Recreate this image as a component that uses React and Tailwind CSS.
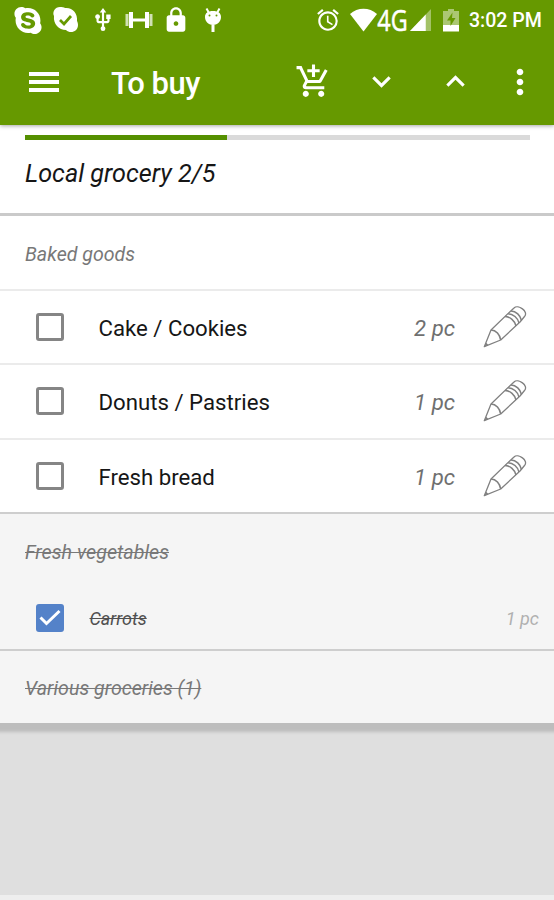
import React, { useState } from 'react';
import {
  MdAddShoppingCart,
  MdAlarm,
  MdExpandLess,
  MdExpandMore,
  MdLock,
  MdMoreVert,
  MdUsb,
} from 'react-icons/md';
import { FaSkype } from 'react-icons/fa';

const bakedGoods = [
  { id: 1, name: 'Cake / Cookies', amount: '2 pc' },
  { id: 2, name: 'Donuts / Pastries', amount: '1 pc' },
  { id: 3, name: 'Fresh bread', amount: '1 pc' },
];

function PencilIcon() {
  return (
    <svg width="44" height="44" viewBox="0 0 44 44" fill="none" stroke="#808080" strokeWidth="1.3" strokeLinejoin="round">
      <path d="M1.3 41.7 8 25 27 6.7 31 3c4-4 15 3.5 10.5 8.500L37 17 17.7 35 1.3 41.7Z" />
      <path d="M8 25c5 0 9 4.500 9.700 10" strokeWidth="1.6" />
      <path d="M22 11.500c5 0 10 4.500 11 9.500M25 8.700c5 0 10 4.500 11 9.300M28 6c5 0 9.500 4.500 10.500 9.500" strokeWidth="1.500" />
      <path d="M1.300 41.700l2-4 2 2.300z" fill="#808080" stroke="none" />
    </svg>
  );
}

function StatusBar() {
  return (
    <div className="flex h-10 items-center pl-3.5 pr-3 text-white">
      <FaSkype className="h-[31px] w-[28px] shrink-0" />

      {/* Sync done */}
      <svg className="ml-[10px] shrink-0" width="27" height="28" viewBox="0 0 27 28">
        <path d="M8 1C3 1 0 6 2 10c-1 8 5 14 12 14 4 4 12 2 12-5 0-2-.5-3-1-4C26 7 20 1 13 2 12 1 10 1 8 1Z" fill="white" />
        <path d="m8 14 4 4 7-8" fill="none" stroke="#669900" strokeWidth="2.7" />
      </svg>

      <MdUsb className="ml-[11px] h-[26px] w-[26px] shrink-0" />

      {/* Dumbbell */}
      <svg className="ml-[9px] shrink-0" width="28" height="18" viewBox="0 0 28 18" fill="white">
        <path d="M4 1h4v16H4zM20 1h4v16h-4zM8 7.500h12v3H8z" />
        <path d="M.5 3h3v12h-3zM24.500 3h3v12h-3z" opacity=".7" />
      </svg>

      <MdLock className="ml-[9px] h-7 w-7 shrink-0" />

      {/* Android head */}
      <svg className="ml-[14px] shrink-0" width="18" height="26" viewBox="0 0 18 26">
        <path d="M2.500 1.500 5 6M15.500 1.500 13 6" stroke="white" strokeWidth="2" />
        <path d="M1 10c0-4 3-6 8-6s8 2 8 6-3 8-8 8-8-4-8-8ZM7.500 18h3v7h-3z" fill="white" />
        <circle cx="5.500" cy="8.500" r="1" fill="#669900" />
        <circle cx="12.500" cy="8.500" r="1" fill="#669900" />
      </svg>

      <div className="flex-1" />

      <MdAlarm className="h-[26px] w-[26px] shrink-0" />
      <svg className="ml-[9px] shrink-0" width="27" height="24" viewBox="0 0 28 24" preserveAspectRatio="none">
        <path d="M0 6C8-1 20-1 28 6L14 23.500Z" fill="white" />
      </svg>
      <div className="flex w-[32px] shrink-0 justify-center">
        <span className="scale-x-[.82] pb-[1px] font-['Open_Sans',sans-serif] text-[28.5px] leading-8 [-webkit-text-stroke:0.5px_white]">4G</span>
      </div>
      <svg className="ml-[1px] shrink-0" width="21" height="22" viewBox="0 0 22 22" preserveAspectRatio="none">
        <path d="M0 22 22 0v22z" fill="white" opacity=".4" />
        <path d="M0 22 16.500 5.500V22z" fill="white" />
      </svg>
      <svg className="ml-[12px] shrink-0" width="16" height="24" viewBox="0 0 16 24">
        <path d="M5 1h6v2h5v15H0V3h5z" fill="white" opacity=".45" />
        <path d="M0 17h16v6.500H0z" fill="white" />
        <path d="M9.500 4.500 4 12.500h3.500V18l5-8H9z" fill="#669900" />
      </svg>
      <span className="ml-[10px] whitespace-nowrap pt-[1px] text-[19.6px] font-medium leading-10">3:02 PM</span>
    </div>
  );
}

function Toolbar() {
  return (
    <div className="flex h-[85px] items-center pb-[2px] pl-[28.5px] text-white">
      <button className="flex flex-col gap-1">
        <span className="h-1 w-[30px] bg-white" />
        <span className="h-1 w-[30px] bg-white" />
        <span className="h-1 w-[30px] bg-white" />
      </button>
      <h1 className="ml-[52.5px] flex-1 pt-[4px] text-[31px] font-medium leading-10 tracking-[-0.5px]">To buy</h1>
      <button><MdAddShoppingCart className="h-[37px] w-[37px]" /></button>
      <button className="ml-[31px]"><MdExpandMore className="h-[37px] w-[37px]" /></button>
      <button className="ml-[37px]"><MdExpandLess className="h-[37px] w-[37px]" /></button>
      <button className="ml-[26px] mr-[14.500px]"><MdMoreVert className="h-10 w-10" /></button>
    </div>
  );
}

function ItemRow({ item, checked, onToggle }) {
  return (
    <li className="flex h-[74.33px] items-center border-t-2 border-[#ebebeb] pl-[35.5px] pr-[27px]">
      <button
        onClick={onToggle}
        className={`h-7 w-7 rounded-[3px] border-3 border-[#858585] ${checked ? 'bg-[#5482c9]' : 'bg-white'}`}
      />
      <span className="ml-[35px] flex-1 pt-[3px] text-[22.2px] text-[#161616]">{item.name}</span>
      <span className="pt-[3px] text-[22.2px] italic text-[#707070]">{item.amount}</span>
      <button className="ml-[28px]"><PencilIcon /></button>
    </li>
  );
}

export default function App() {
  const [checked, setChecked] = useState([]);

  const toggle = (id) =>
    setChecked((prev) => (prev.includes(id) ? prev.filter((c) => c !== id) : [...prev, id]));

  return (
    <div className="flex h-[900px] w-[554px] flex-col overflow-hidden border-b-5 border-[#eeeeee] bg-[#dfdfdf] font-[Roboto,sans-serif]">
      <header className="relative z-10 bg-[#669900] shadow-[0_1px_4px_rgba(0,0,0,0.35)]">
        <StatusBar />
        <Toolbar />
      </header>

      <main className="bg-white shadow-[0_6px_3px_3px_#bdbdbd]">
        {/* List name and progress */}
        <section className="h-[91px] border-b-3 border-[#cacaca] px-[25px] pt-[10px]">
          <div className="mr-[-1px] h-[4.5px] bg-[#dadada]">
            <div className="h-full w-2/5 bg-[#559000]" />
          </div>
          <h2 className="mt-[18.5px] text-[25.2px] italic leading-8 text-[#161616]">Local grocery 2/5</h2>
        </section>

        <section>
          <h3 className="flex h-[73px] items-center pl-[25px] pt-[4px] text-[19.6px] italic text-[#787878]">Baked goods</h3>
          <ul>
            {bakedGoods.map((item) => (
              <ItemRow
                key={item.id}
                item={item}
                checked={checked.includes(item.id)}
                onToggle={() => toggle(item.id)}
              />
            ))}
          </ul>
        </section>

        {/* Finished groups */}
        <section className="h-[137px] border-t-2 border-[#cecece] bg-[#f5f5f5]">
          <h3 className="flex h-[75px] items-center pl-[25px] pt-[2px] text-[19.7px] italic text-[#787878] line-through">Fresh vegetables</h3>
          <div className="flex h-[58px] items-center pl-[35.5px] pr-[15px]">
            <div className="flex h-7 w-7 items-center justify-center rounded-[3px] bg-[#5482c9]">
              <svg width="24" height="20" viewBox="0 0 24 20" fill="none" stroke="white" strokeWidth="3">
                <path d="m2.500 9.500 6 6L21.500 3" />
              </svg>
            </div>
            <span className="ml-[26px] flex-1 pt-[2px] text-[18px] italic text-[#505050] line-through">Carrots</span>
            <span className="pt-[2px] text-[18px] italic text-[#b0b0b0]">1 pc</span>
          </div>
        </section>
        <section className="h-[74px] border-t-2 border-[#cecece] bg-[#f5f5f5]">
          <h3 className="flex h-[73px] items-center pl-[25px] pt-[3px] text-[19.6px] italic text-[#787878] line-through">Various groceries (1)</h3>
        </section>
      </main>
    </div>
  );
}
